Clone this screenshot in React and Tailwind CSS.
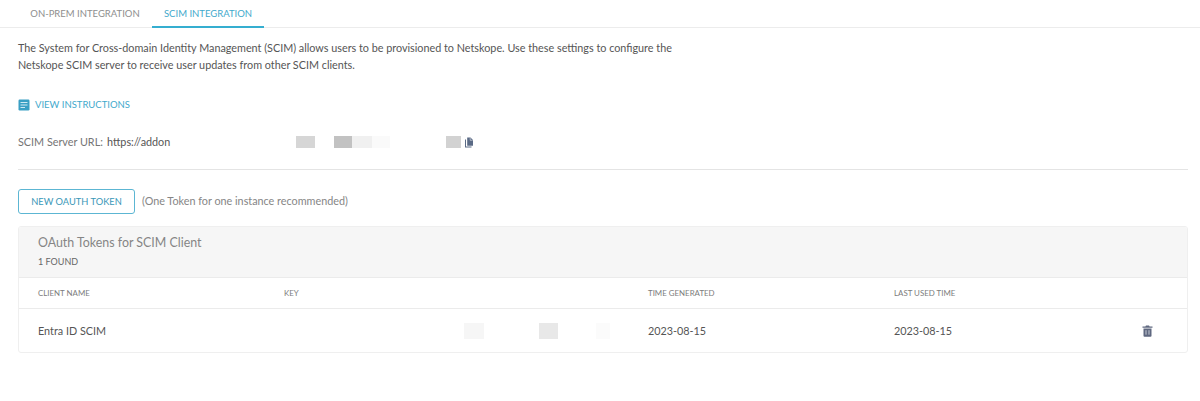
import React from "react";

const App = () => {
  return (
    <div className="w-[1200px] h-[401px] bg-white overflow-hidden font-['Lato',sans-serif] text-[#4a4a4a]">
      {/* Tabs */}
      <div className="flex h-[28px] pl-[18px] border-b border-[#ececec]">
        <div className="w-[134px] h-[27px] pt-[8px] text-center text-[9.5px] leading-[12px] text-[#8e8e8e]">ON-PREM INTEGRATION</div>
        <div className="w-[112px] h-[28px] pt-[8px] text-center text-[9.5px] leading-[12px] text-[#3fa9cc] border-b-2 border-[#35aed0]">SCIM INTEGRATION</div>
      </div>

      <div className="pl-[18px] pr-[12px]">
        <p className="w-[700px] mt-[11px] text-[10.8px] leading-[17px] text-[#555555]">
          The System for Cross-domain Identity Management (SCIM) allows users to be provisioned to Netskope. Use these settings to configure the Netskope SCIM server to receive user updates from other SCIM clients.
        </p>

        {/* Instructions */}
        <div className="flex items-center mt-[25px] h-[14px] text-[#3fa9cc]">
          <svg width="12" height="12" viewBox="0 0 12 12" className="mr-[5px]">
            <rect x="0.5" y="0.5" width="11" height="11" rx="1.2" fill="#3a9fc4" />
            <path d="M2.5 3.5h7M2.5 6h7M2.5 8.5h4.5" stroke="#cfe9f3" strokeWidth="1" />
          </svg>
          <span className="text-[9.5px]">VIEW INSTRUCTIONS</span>
        </div>

        {/* URL row */}
        <div className="flex items-center mt-[22px] h-[16px] text-[10.8px] whitespace-nowrap">
          <span className="w-[89px] text-[#757575]">SCIM Server URL:</span>
          <span className="w-[189px] text-[#555555]">https://addon</span>
          <div className="w-[19px] h-[12px] bg-[#d6d6d6]" />
          <div className="w-[19px]" />
          <div className="w-[18px] h-[12px] bg-[#c2c2c2]" />
          <div className="w-[20px] h-[12px] bg-[#f0f0f0]" />
          <div className="w-[18px] h-[12px] bg-[#fafafa]" />
          <div className="w-[56px]" />
          <div className="w-[15px] h-[12px] bg-[#d2d2d2]" />
          <svg width="10" height="11" viewBox="0 0 10 11" className="ml-[3px] mt-[1px]">
            <path d="M1 2.5v8h6.5v-1H2V2.5z" fill="#5a6a85" />
            <path d="M3.2 0.5h3.3L9 3v5.8H3.2z" fill="#5a6a85" />
            <path d="M6.2 0.8v2.5h2.5" fill="none" stroke="#ffffff" strokeWidth="0.5" />
          </svg>
        </div>

        <div className="mt-[19px] border-t border-[#e4e4e4]" />

        {/* Token button */}
        <div className="flex items-center mt-[19px]">
          <button className="w-[117px] h-[25px] rounded-[3px] border border-[#5cb6d3] text-[9.3px] text-[#3a97b8]">NEW OAUTH TOKEN</button>
          <span className="ml-[7px] text-[10.8px] text-[#858585]">(One Token for one instance recommended)</span>
        </div>

        {/* Tokens table */}
        <div className="mt-[12px] h-[127px] w-[1170px] rounded-[3px] border border-[#efefef] overflow-hidden">
          <div className="h-[51px] bg-[#f6f6f6] border-b border-[#ebebeb] pl-[19px] pt-[8px]">
            <div className="text-[12.4px] leading-[16px] text-[#858585]">OAuth Tokens for SCIM Client</div>
            <div className="mt-[5px] text-[9px] leading-[12px] text-[#666666]">1 FOUND</div>
          </div>
          <div className="flex items-center h-[31px] pt-[2px] pl-[19px] border-b border-[#ebebeb] text-[7.9px] text-[#7c7c7c]">
            <span className="w-[246px]">CLIENT NAME</span>
            <span className="w-[364px]">KEY</span>
            <span className="w-[246px]">TIME GENERATED</span>
            <span>LAST USED TIME</span>
          </div>
          <div className="flex items-center h-[43px] pt-[1px] pl-[19px] text-[10.8px] text-[#555555]">
            <span className="w-[246px]">Entra ID SCIM</span>
            <div className="w-[364px] flex items-center">
              <div className="ml-[180px] w-[20px] h-[16px] bg-[#f6f6f6]" />
              <div className="ml-[55px] w-[19px] h-[16px] bg-[#e8e8e8]" />
              <div className="ml-[38px] w-[14px] h-[16px] bg-[#fbfbfb]" />
            </div>
            <span className="w-[246px]">2023-08-15</span>
            <span className="w-[249px]">2023-08-15</span>
            <svg width="11" height="12" viewBox="0 0 11 12" className="-ml-[1px]">
              <path d="M4 0.5h3l.6 1H10.5v1.2H.5V1.5h2.9z" fill="#5f6880" />
              <path d="M1.5 3.5h8v7.2a1 1 0 0 1-1 1h-6a1 1 0 0 1-1-1z" fill="#5f6880" />
              <path d="M4 5.2v4.5M7 5.2v4.5" stroke="#c8ccd6" strokeWidth="1" />
            </svg>
          </div>
        </div>
      </div>
    </div>
  );
};

export default App;
